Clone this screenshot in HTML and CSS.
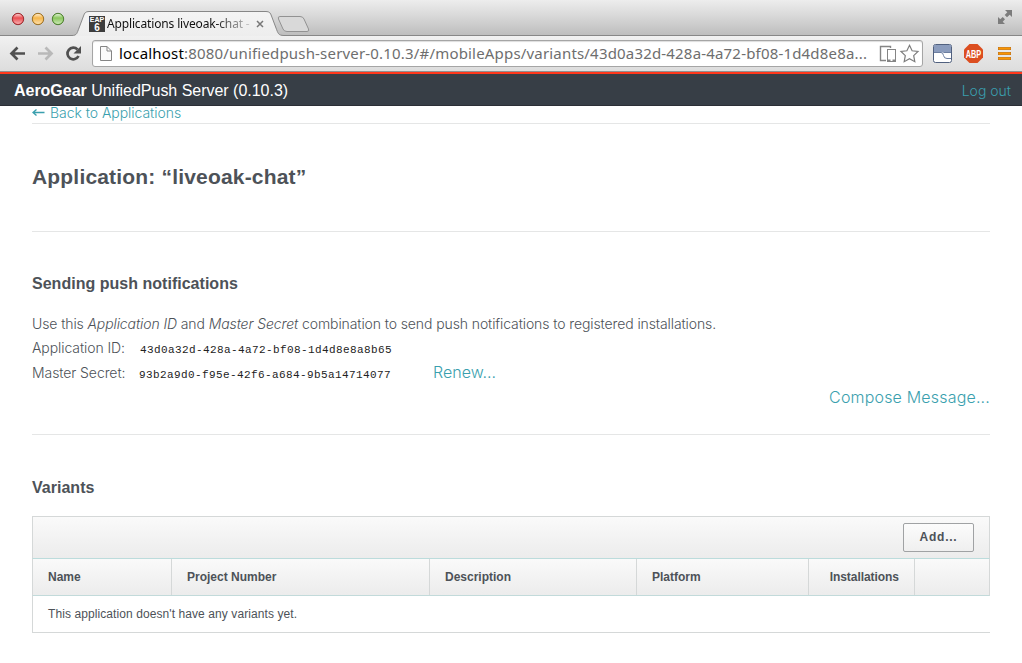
FILE: index.html
```
<!DOCTYPE html>
<html lang="en">
<head>
<meta charset="utf-8">
<title>Applications liveoak-chat</title>
<link rel="stylesheet" href="styles.css">
</head>
<body>
<div class="titlebar">
  <svg class="chrome-art" width="1022" height="36" viewBox="0 0 1022 36">
    <defs>
      <linearGradient id="tab" x1="0" y1="0" x2="0" y2="1"><stop offset="0" stop-color="#f4f4f4"/><stop offset="1" stop-color="#ededed"/></linearGradient>
      <linearGradient id="shade" x1="0" y1="0" x2="0" y2="1"><stop offset="0" stop-color="#fff" stop-opacity=".75"/><stop offset=".4" stop-color="#fff" stop-opacity=".1"/><stop offset="1" stop-color="#fff" stop-opacity=".6"/></linearGradient>
    </defs>
    <g stroke-width="1">
      <circle cx="18" cy="19" r="5.7" fill="#e8393d" stroke="#973034"/>
      <circle cx="38" cy="19" r="5.7" fill="#f5ae35" stroke="#98712c"/>
      <circle cx="58" cy="19" r="5.7" fill="#7cc04a" stroke="#4f7e35"/>
    </g>
    <g fill="url(#shade)"><circle cx="18" cy="19" r="5"/><circle cx="38" cy="19" r="5"/><circle cx="58" cy="19" r="5"/></g>
    <path d="M0 35.500H72C77 35.500 77 33 79 28L83.500 16C84.500 13 85.500 11.500 89 11.500H266C269.500 11.500 270.500 13 271.500 16L276 28C278 33 278 35.500 284 35.500H1022V37H0Z" fill="url(#tab)"/>
    <path d="M0 35.500H72C77 35.500 77 33 79 28L83.500 16C84.500 13 85.500 11.500 89 11.500H266C269.500 11.500 270.500 13 271.500 16L276 28C278 33 278 35.500 284 35.500H1022" fill="none" stroke="#878787"/>
    <path d="M280 16.500H300Q303 16.500 304 19L308.500 29Q309.500 31.500 307 31.500H287Q284 31.500 283 29L278.500 19Q277.500 16.500 280 16.500Z" fill="#d9d9d9" stroke="#929292"/>
    <path d="M257 21l6 6m0-6l-6 6" stroke="#777" stroke-width="1.500"/>
    <path d="M1005 10H1012V17L1009.700 14.700L1007 17.300L1004.700 15L1007.300 12.300ZM998 17L1000.300 19.300L1002.700 17L1005 19.300L1002.700 21.700L1005 24H998Z" fill="#7c7c7c"/>
  </svg>
  <div class="favicon"><span>EAP</span><b>6</b></div>
  <div class="tab-title">Applications liveoak-chat -</div>
</div>
<div class="toolbar">
  <svg class="nav" width="92" height="34" viewBox="0 36 92 34" fill="none">
    <path d="M25 53.500H12M17.500 47.500L11.500 53.500L17.500 59.500" stroke="#505050" stroke-width="2.700"/>
    <path d="M38 53.500H51M45.500 47.500L51.500 53.500L45.500 59.500" stroke="#b9b9b9" stroke-width="2.700"/>
    <path d="M78.500 56A5.800 5.800 0 1 1 77.500 49.500" stroke="#505050" stroke-width="2.700"/>
    <path d="M81 46v7.500h-7.500z" fill="#505050"/>
  </svg>
  <div class="omnibox">
    <svg width="14" height="18" viewBox="0 0 14 18"><path d="M1.500 1.500H8L12.500 6V15.500H1.500ZM8 1.500V6H12.500" fill="#fafafa" stroke="#858585"/></svg>
    <div class="url"><b>localhost</b>:8080/unifiedpush-server-0.10.3/#/mobileApps/variants/43d0a32d-428a-4a72-bf08-1d4d8e8a...</div>
    <svg class="omni-icons" width="44" height="26" viewBox="878 41 44 26" fill="none" stroke="#858585">
      <path d="M890.500 48V46.500H880.500V60.500H886" stroke-width="1.400"/>
      <rect x="887.500" y="49.500" width="8" height="12"/><path d="M887 60.500H890.500M892.500 60.500H896" stroke-width="2"/>
      <path d="M909.500 45.300L912.100 50.800L918 51.500L913.700 55.600L914.800 61.700L909.500 58.700L904.200 61.700L905.300 55.600L901 51.500L906.900 50.800Z" stroke-width="1.200" stroke="#7d7d7d"/>
    </svg>
  </div>
  <svg class="extensions" width="99" height="34" viewBox="923 36 99 34">
    <rect x="933.500" y="44.500" width="18" height="18" rx="2" fill="#fff" stroke="#51617f"/>
    <path d="M934 45H951V52.500H934Z" fill="#8b9cbd"/>
    <path d="M934 52.500H941Q943 52.500 943.500 55.500Q944 58.500 947 58.500H951M943.500 52.500H951" fill="none" stroke="#6c7ea0"/>
    <path d="M969.500 44H977.500L983 49.500V57.500L977.500 63H969.500L964 57.500V49.500Z" fill="#dc4e20"/>
    <text class="abp" x="973.500" y="57.500" text-anchor="middle" textLength="15.500" lengthAdjust="spacingAndGlyphs">ABP</text>
    <g fill="#f99500" stroke="#c46b00" stroke-width=".6"><rect x="998.300" y="47.300" width="12.400" height="2.400"/><rect x="998.300" y="52.300" width="12.400" height="2.400"/><rect x="998.300" y="57.300" width="12.400" height="2.400"/></g>
  </svg>
</div>
<header class="app-header"><div class="brand"><b>AeroGear</b> UnifiedPush Server (0.10.3)</div><a class="logout">Log out</a></header>
<main class="content">
  <div class="back"><svg width="13" height="9" viewBox="0 0 13 9"><path d="M1 4.500H12.500M4.500 1.500L1 4.500L4.500 7.500" fill="none" stroke="#3a9fae" stroke-width="1.400"/></svg><a>Back to Applications</a></div>
  <section class="heading"><h1>Application: “liveoak-chat”</h1></section>
  <section class="sending">
    <h2>Sending push notifications</h2>
    <p>Use this <em>Application ID</em> and <em>Master Secret</em> combination to send push notifications to registered installations.</p>
    <div class="row"><span class="label">Application ID:</span><code>43d0a32d-428a-4a72-bf08-1d4d8e8a8b65</code></div>
    <div class="row"><span class="label">Master Secret:</span><code>93b2a9d0-f95e-42f6-a684-9b5a14714077</code><a class="renew">Renew...</a></div>
    <div class="compose"><a>Compose Message...</a></div>
  </section>
  <section class="variants">
    <h2>Variants</h2>
    <div class="table">
      <div class="actions"><button>Add...</button></div>
      <div class="thead"><div>Name</div><div>Project Number</div><div>Description</div><div>Platform</div><div class="right">Installations</div><div></div></div>
      <div class="empty">This application doesn't have any variants yet.</div>
    </div>
  </section>
</main>
</body>
</html>
```
FILE: styles.css
```
* { box-sizing: border-box; }
body { margin: 0; width: 1022px; height: 663px; overflow: hidden; background: #fff; color: #4d5258; font-family: "Liberation Sans", Arial, sans-serif; }
h1, h2, p { margin: 0; }
a { color: #3a9fae; font-family: Inter, sans-serif; font-weight: 300; white-space: nowrap; }
svg { flex: none; display: block; }
.titlebar { position: relative; height: 36px; background: linear-gradient(#ededed, #d8d8d8 45%, #bcbcbc); }
.chrome-art { position: absolute; inset: 0; }
.favicon { position: absolute; left: 89px; top: 16px; width: 16px; height: 16px; background: #3d3d3d; color: #fff; text-align: center; font: bold 7px/7px "Liberation Sans", sans-serif; }
.favicon span, .favicon b { display: block; }
.favicon b { font-size: 10px; line-height: 9px; }
.tab-title { position: absolute; left: 107px; top: 16px; font: 12px/16px "Noto Sans", sans-serif; letter-spacing: -.15px; white-space: nowrap; background: linear-gradient(90deg, #111 75%, rgba(17,17,17,.15)); -webkit-background-clip: text; background-clip: text; color: transparent; }
.toolbar { height: 38px; display: flex; background: linear-gradient(#f1f1f1, #dcdcdc); border-bottom: 2px solid #ff381c; box-shadow: inset 0 -1px #909090; }
.omnibox { width: 831px; height: 27px; margin-top: 4px; display: flex; align-items: center; border: 1px solid #a5a5a5; border-radius: 3px; background: #fff; padding-left: 6px; box-shadow: inset 0 1px 1px #ddd; }
.url { flex: 1; padding: 0 0 0 6px; font: 15px/23px "Noto Sans", sans-serif; letter-spacing: .182px; color: #6e6e6e; white-space: nowrap; }
.url b { font-weight: 400; color: #000; }
.abp { font: bold 11px "Liberation Sans", sans-serif; fill: #fff; }
.app-header { height: 32px; display: flex; justify-content: space-between; align-items: center; padding: 2px 11px 0 14px; background: #373e46; border-bottom: 1px solid #2c2f36; color: #fff; font-size: 16px; }
.brand { letter-spacing: -.02px; }
.logout { font-size: 14px; }
.content { padding: 0 32px; }
.back { height: 18px; display: flex; align-items: center; gap: 5px; padding-bottom: 4px; border-bottom: 1px solid #e5e6e6; font-size: 14px; line-height: 14px; }
.back a { letter-spacing: -.04px; }
.heading { height: 108px; border-bottom: 1px solid #e5e6e6; padding-top: 40px; }
h1 { font-size: 21px; line-height: 26px; letter-spacing: .18px; }
.sending { height: 203px; padding-top: 41px; border-bottom: 1px solid #e5e6e6; }
h2 { font-size: 16px; line-height: 22px; letter-spacing: .02px; }
p { margin-top: 17px; height: 24px; font: 300 14px/24px Inter, sans-serif; letter-spacing: -.1px; white-space: nowrap; }
.row { display: flex; height: 25px; align-items: center; }
.label { width: 94px; padding-bottom: 2px; font: 300 14px Inter, sans-serif; letter-spacing: -.08px; white-space: nowrap; }
code { font: 11px "Liberation Mono", monospace; letter-spacing: .4px; color: #222; padding-top: 3px; margin-left: 14px; }
.row + .row code { margin-left: 13px; }
.renew { font-size: 16px; padding-bottom: 4px; margin-left: 42px; }
.compose { text-align: right; font-size: 16px; line-height: 22px; letter-spacing: .18px; }
.variants { padding-top: 42px; }
.table { margin-top: 17px; }
.actions { height: 43px; border: 1px solid #d5d8d8; border-bottom-color: #bcdcdc; background: linear-gradient(#fafafa, #ececec); display: flex; justify-content: flex-end; padding: 6px 15px 0 0; }
button { width: 71px; height: 29px; border: 1px solid #a0a2a4; border-radius: 2px; background: linear-gradient(#fcfcfc, #efefef); color: #4d5258; font: bold 12px "Liberation Sans", sans-serif; letter-spacing: .75px; padding: 0 0 2px; }
.thead { height: 37px; display: grid; grid-template-columns: 139px 258px 207px 172px 106px 75px; border: solid #d5d8d8; border-width: 0 1px 1px; border-bottom-color: #c2dada; background: linear-gradient(#fafafa, #ececec); font: bold 12px/36px "Liberation Sans", sans-serif; }
.thead div { height: 36px; padding: 0 0 0 15px; border-right: 1px solid #d5d8d8; line-height: 37px; }
.thead div:last-child { border: 0; }
.thead .right { padding: 0 15px 0 0; text-align: right; letter-spacing: -.05px; }
.empty { height: 37px; border: solid #d5d8d8; border-width: 0 0 1px 1px; padding-left: 15px; font-size: 12px; line-height: 36px; letter-spacing: .085px; }
```
